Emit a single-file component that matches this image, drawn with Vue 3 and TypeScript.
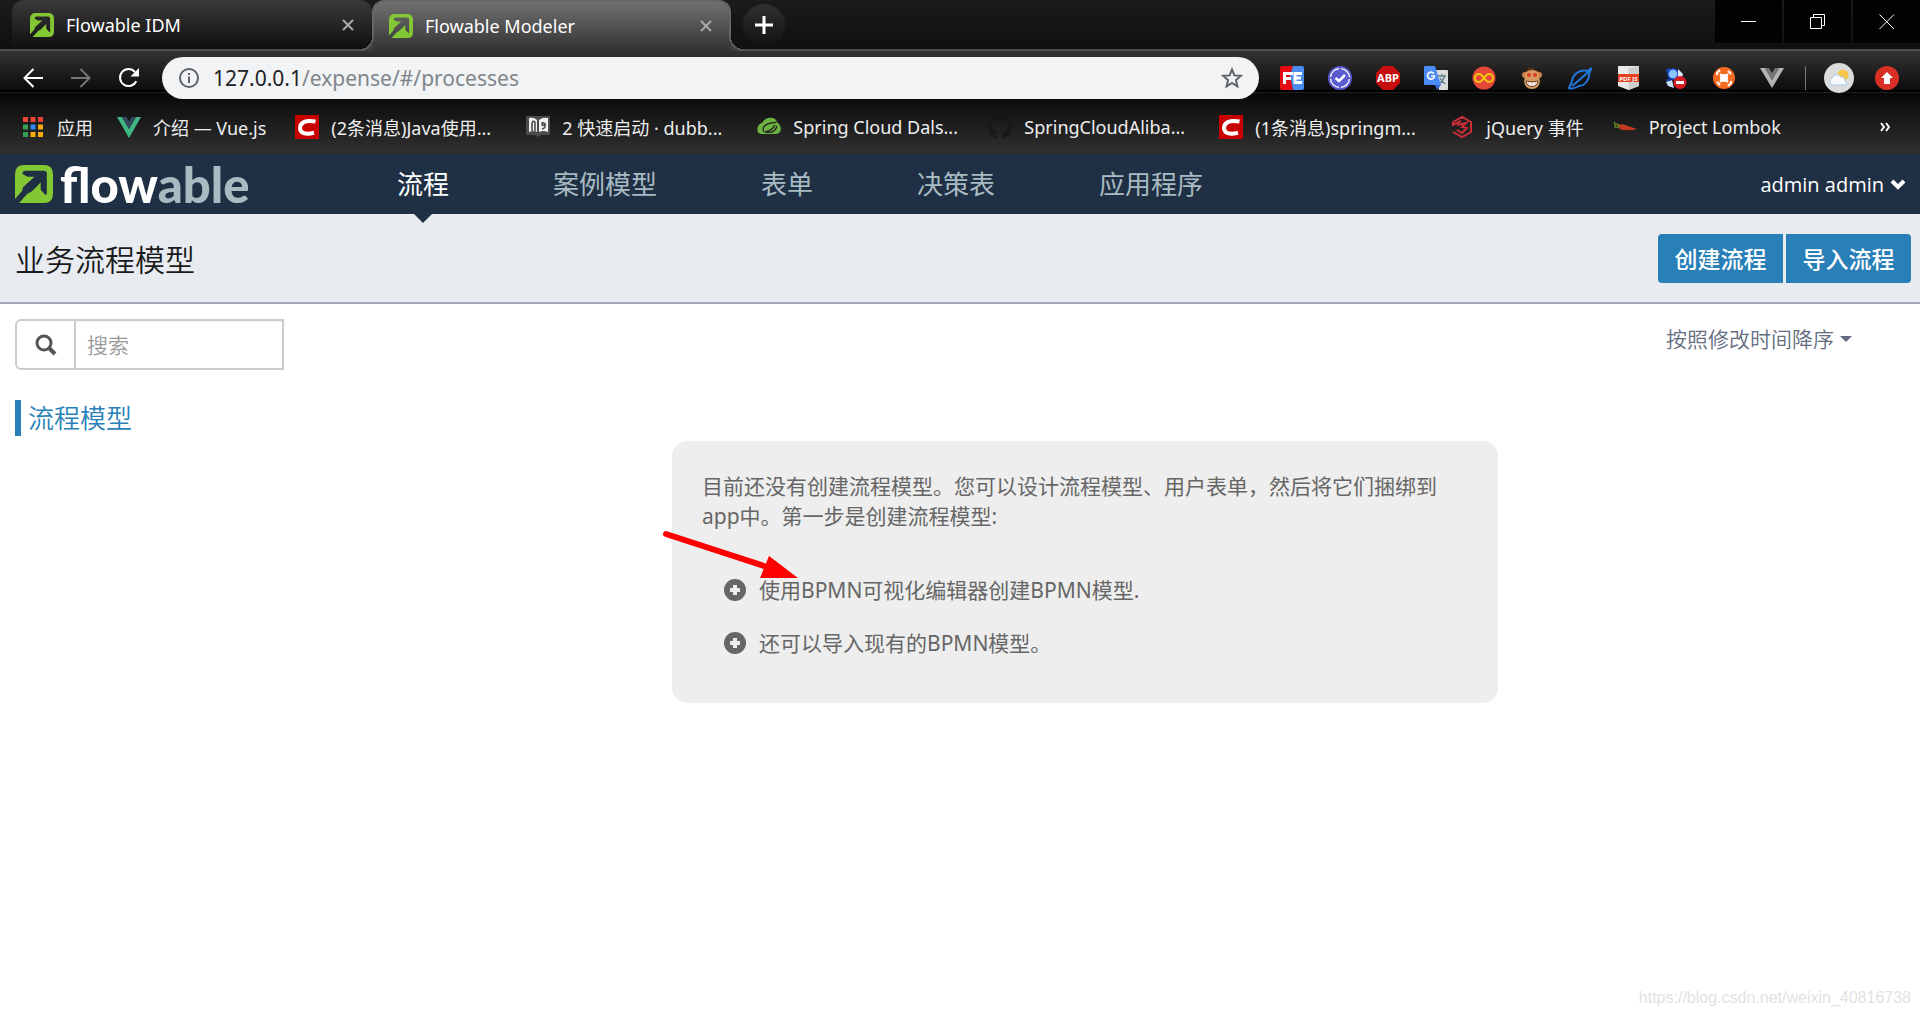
<script setup lang="ts">
import { ref } from 'vue'

interface Tab {
  title: string
  active: boolean
}

interface Bookmark {
  icon: string
  label: string
  fixed: boolean
}

const logoPath =
  'M9 0H28Q37 0 37 9V28Q37 37 28 37H4L12 28 16 26 25 17V24L30 29.500 31 28V8Q31 5.500 28 5.500H9.500Q7 6 7 8.500L12 11.500H19L8 21.500 7 25 0 33V9Q0 0 9 0Z'

const tabs: Tab[] = [
  { title: 'Flowable IDM', active: false },
  { title: 'Flowable Modeler', active: true },
]

const bookmarks: Bookmark[] = [
  { icon: 'apps', label: '应用', fixed: false },
  { icon: 'vue', label: '介绍 — Vue.js', fixed: false },
  { icon: 'csdn', label: '(2条消息)Java使用...', fixed: true },
  { icon: 'dubbo', label: '2 快速启动 · dubb...', fixed: true },
  { icon: 'spring', label: 'Spring Cloud Dals...', fixed: true },
  { icon: 'github', label: 'SpringCloudAliba...', fixed: true },
  { icon: 'csdn', label: '(1条消息)springm...', fixed: true },
  { icon: 'jquery', label: 'jQuery 事件', fixed: false },
  { icon: 'lombok', label: 'Project Lombok', fixed: false },
]

const navItems = ['流程', '案例模型', '表单', '决策表', '应用程序']
const current = ref('流程')
const query = ref('')
const hints = ['使用BPMN可视化编辑器创建BPMN模型.', '还可以导入现有的BPMN模型。']
</script>

<template>
  <div class="screen">
    <header class="browser">
      <div class="tab-strip">
        <div v-for="tab in tabs" :key="tab.title" class="tab" :class="{ active: tab.active }">
          <svg class="favicon" viewBox="0 0 37 37" aria-hidden="true">
            <path fill="#84c735" :d="logoPath" />
          </svg>
          <span class="tab-title">{{ tab.title }}</span>
          <button class="tab-close" type="button" aria-label="关闭标签页">
            <svg viewBox="0 0 14 14" width="14" height="14"><path d="M2 2 12 12M12 2 2 12" /></svg>
          </button>
        </div>
        <button class="new-tab" type="button" aria-label="新标签页">
          <svg viewBox="0 0 18 18" width="18" height="18"><path d="M9 0V18M0 9H18" /></svg>
        </button>
        <div class="window-controls">
          <button type="button" aria-label="最小化">
            <svg viewBox="0 0 16 16" width="16" height="16"><path d="M0 7.5H15" /></svg>
          </button>
          <button type="button" aria-label="还原">
            <svg viewBox="0 0 16 16" width="16" height="16"><path d="M.5 3.500H11.500V14.500H.5ZM3.500 3.500V.5H14.500V11.500H11.500" /></svg>
          </button>
          <button type="button" aria-label="关闭">
            <svg viewBox="0 0 16 16" width="16" height="16"><path d="M.5 .5 15 15M15 .5 .5 15" /></svg>
          </button>
        </div>
      </div>

      <div class="toolbar-area">
        <div class="toolbar">
          <div class="history">
            <button type="button" aria-label="后退">
              <svg viewBox="0 0 22 22" width="22" height="22"><path d="M21 11H3M11.500 2 2.500 11 11.500 20" stroke="#fff" /></svg>
            </button>
            <button type="button" aria-label="前进">
              <svg viewBox="0 0 22 22" width="22" height="22"><path d="M1 11H19M10.500 2 19.500 11 10.500 20" stroke="#777" /></svg>
            </button>
            <button type="button" aria-label="重新加载">
              <svg viewBox="0 0 22 22" width="22" height="22"><path d="M18.200 14.200A8.500 8.500 0 1 1 17 5" stroke="#fff" /><path d="M21 1V9.500H12.500Z" fill="#fff" /></svg>
            </button>
          </div>
          <div class="omnibox">
            <svg viewBox="0 0 22 22" width="22" height="22" aria-hidden="true">
              <circle cx="11" cy="11" r="9" fill="none" stroke="#5f6368" stroke-width="2" />
              <path d="M10 9.500H12V16H10ZM10 6H12V8H10Z" fill="#5f6368" />
            </svg>
            <span class="url" tabindex="0">127.0.0.1<span>/expense/#/processes</span></span>
            <button type="button" aria-label="收藏">
              <svg viewBox="0 0 22 22" width="22" height="22">
                <path d="M11 2.500 13.400 8.400 19.800 8.900 15 13.100 16.400 19.300 11 16 5.600 19.300 7 13.100 2.200 8.900 8.600 8.400Z" fill="none" stroke="#5f6368" stroke-width="2" />
              </svg>
            </button>
          </div>
          <div class="extensions">
            <svg viewBox="0 0 24 24"><path fill="#e60a12" d="M2 0H13L10 9 13 24H2Q0 24 0 22V2Q0 0 2 0Z" /><path fill="#4a8cf0" d="M13 0H22Q24 0 24 2V22Q24 24 22 24H13L10 9Z" /><path fill="none" stroke="#fff" stroke-width="3" d="M4.500 18V7.500H13M4.500 12.500H11M22 7.500H15V16.500H22M15 12H21" /></svg>
            <svg viewBox="0 0 24 24"><circle cx="12" cy="12" r="12" fill="#5b5bd0" /><circle cx="12" cy="12" r="9.500" fill="none" stroke="#fff" stroke-width="1.300" stroke-dasharray="12.900 2" stroke-dashoffset="-1" /><path fill="none" stroke="#fff" stroke-width="2.500" d="M7.500 12 11 15 17 9" /></svg>
            <svg viewBox="0 0 24 24"><path fill="#c70d0d" d="M7 0H17L24 7V17L17 24H7L0 17V7Z" /><text x="12" y="16" text-anchor="middle" font-size="11" font-weight="700" fill="#fff">ABP</text></svg>
            <svg viewBox="0 0 24 24"><path fill="#dcdcdc" d="M11 4H23Q24 4 24 5V23Q24 24 23 24H15Z" /><path fill="none" stroke="#607d8b" stroke-width="1.300" d="M14 10H22M18 8V10M20.500 10Q19.500 15 14.500 18M16 12Q18 16 21.500 18" /><path fill="#3367d6" d="M11 19H17L13 24Z" /><path fill="#4a8af4" d="M1 0H11L17 19H1Q0 19 0 18V1Q0 0 1 0Z" /><path fill="none" stroke="#fff" stroke-width="1.700" d="M9.800 7.500A3.500 3.500 0 1 0 10.500 10H7" /></svg>
            <svg viewBox="0 0 24 24"><circle cx="12" cy="12" r="11.500" fill="#e5473a" /><path fill="none" stroke="#f3c60e" stroke-width="2" d="M12 12C9.500 8.500 8 8 6.800 8A4 4 0 0 0 6.800 16C8 16 9.500 15.500 12 12S15.500 8 17 8A4 4 0 0 1 17 16C15.500 16 14.500 15.500 12 12Z" /></svg>
            <svg viewBox="0 0 24 24"><path fill="#5b3217" d="M4 7 7 4 9 1 11 3 13 1 15 4 19 5 21 10H3Z" /><circle cx="5" cy="9" r="3" fill="#c8844c" /><circle cx="19" cy="9" r="3" fill="#c8844c" /><path fill="#d79a62" d="M6 6Q12 2 18 6L20 15Q19 23 12 23T4 15Z" /><circle cx="9" cy="9" r="2" fill="#e03a2a" /><circle cx="15" cy="9" r="2" fill="#e03a2a" /><path fill="#fff" stroke="#6b3b1a" d="M6 15Q12 17 18 15 17 20.500 12 20.500 7 20.500 6 15Z" /><path stroke="#a98466" stroke-width=".6" d="M9 16V19M12 16V20M15 16V19" /></svg>
            <svg viewBox="0 0 24 24"><path fill="none" stroke="#2277dd" stroke-width="2" d="M24 2Q22 5 21 7C22 13 17 20 11 20 8 22 3 23 1 22 2 18 4 17 4 15 5 8 12 3 20 5L23 2M4 20Q14 12 20 6" /></svg>
            <svg viewBox="0 0 24 24"><path fill="#e9e9e9" d="M2 0H23V20L12.500 24 2 20Z" /><path fill="#cfcfcf" d="M12.500 2 23 0V20L12.500 24Z" /><path fill="#e8401f" d="M2 8H23V16H2Z" /><text x="12.500" y="15" text-anchor="middle" font-size="6" font-weight="700" fill="#fff">PDF JS</text></svg>
            <svg viewBox="0 0 24 24"><circle cx="9" cy="8" r="5" fill="#8cc4ff" stroke="#1d50d8" stroke-width="1.500" /><path fill="#dce9f8" d="M14 3 19 8 18 12H14Z" /><path fill="#c6dcf5" d="M2 16 8 14 10 22 4 20Z" /><path stroke="#1d50d8" stroke-width="1.500" d="M2 5 6 3M2 14 7 14" /><circle cx="16" cy="16.500" r="6.500" fill="#d81b20" /><path fill="#fff" d="M12 15H20V18H12Z" /></svg>
            <svg viewBox="0 0 24 24"><circle cx="12" cy="12" r="11" fill="#f36a21" /><circle cx="12" cy="12" r="4" fill="#fff" /><path fill="none" stroke="#fff" stroke-width="2" d="M8 8 16 16M16 8 8 16M5 9V7L8 4M16 5 19 8M5 16 8 19M16 20 19 17V15" /></svg>
            <svg viewBox="0 0 24 24"><path fill="#b4b4b4" d="M0 2H5L12 14 19 2H24L12 22Z" /><path fill="#777" d="M5 2H9L12 7 15 2H19L12 14Z" /></svg>
          </div>
          <i class="divider"></i>
          <svg class="avatar" viewBox="0 0 30 30" aria-hidden="true"><circle cx="15" cy="15" r="15" fill="#dcdcdc" /><circle cx="19" cy="12" r="5.500" fill="#f8c64a" /><path fill="#f6faff" stroke="#a9c8e6" d="M8 22A4 4 0 0 1 8 15 5 5 0 0 1 17 14 3.500 3.500 0 0 1 21 18 2.500 2.500 0 0 1 22 22Z" /></svg>
          <svg class="update" viewBox="0 0 24 24" aria-hidden="true"><circle cx="12" cy="12" r="12" fill="#d93025" /><path fill="#fff" d="M12 6 18 12H15V18H9V12H6Z" /></svg>
        </div>

        <nav class="bookmarks" aria-label="书签">
          <a v-for="b in bookmarks" :key="b.label" href="#" class="bookmark" :class="{ fixed: b.fixed, apps: b.icon === 'apps' }">
            <svg v-if="b.icon === 'apps'" class="apps-icon" viewBox="0 0 20 20"><path fill="#ea4335" d="M0 0H5V5H0ZM7.500 0H12.500V5H7.500ZM15 0H20V5H15Z" /><path fill="#34a053" d="M0 7.500H5V12.500H0ZM0 15H5V20H0Z" /><path fill="#2a8af6" d="M7.500 7.500H12.500V12.500H7.500Z" /><path fill="#f9ab0b" d="M15 7.500H20V12.500H15ZM7.500 15H12.500V20H7.500ZM15 15H20V20H15Z" /></svg>
            <svg v-else-if="b.icon === 'vue'" viewBox="0 0 24 24"><path fill="#41b883" d="M0 2H5L12 14 19 2H24L12 23Z" /><path fill="#35495e" d="M5 2H9.500L12 6.500 14.500 2H19L12 14Z" /></svg>
            <svg v-else-if="b.icon === 'csdn'" viewBox="0 0 24 24"><path fill="#c90000" d="M0 0H24V24H0Z" /><path fill="none" stroke="#fff" stroke-width="4" d="M20.500 6.500C10 4.500 5 8 5 13S10 20 19 17.800" /></svg>
            <svg v-else-if="b.icon === 'dubbo'" viewBox="0 0 24 24"><path fill="#4b4b4b" d="M0 1H24V20H15L12 22 9 20H0Z" /><path fill="#f1f1f1" d="M3 3Q8 2 11 5V17Q8 15 3 17ZM13 5Q17 2 22 3V17Q17 15 13 17Z" /><path fill="none" stroke="#444" stroke-width="1.500" d="M6 16V8M9 16V7M6 8Q7 5 9 7M19 9Q16 6 16 9T19 9Q20 13 16 14" /></svg>
            <svg v-else-if="b.icon === 'spring'" viewBox="0 0 24 24"><path fill="#6db33f" d="M4 19C-2 18 0 9 5 8 8 2 15 2 18 4L20 6C21 7 20 8 22 9 26 14 23 19 19 19Z" /><path fill="none" stroke="#222" stroke-width="1.300" d="M7 17C4 12 9 9 14 8 18 8 20 7 21 5M8 17Q16 15 18 10M8 17Q18 19 20 11" /></svg>
            <svg v-else-if="b.icon === 'github'" viewBox="0 0 16 16"><path fill="#171717" fill-rule="evenodd" d="M8 0C3.580 0 0 3.580 0 8c0 3.540 2.290 6.530 5.470 7.590.4.070.55-.17.55-.38 0-.19-.01-.82-.01-1.490-2.010.37-2.530-.49-2.690-.94-.09-.23-.48-.94-.82-1.130-.28-.15-.68-.52-.01-.53.63-.01 1.080.58 1.230.82.72 1.210 1.870.87 2.330.66.070-.52.28-.87.51-1.070-1.780-.2-3.640-.89-3.640-3.950 0-.87.31-1.590.82-2.150-.08-.2-.36-1.020.08-2.120 0 0 .67-.21 2.200.82.64-.18 1.320-.27 2-.27s1.360.09 2 .27c1.530-1.040 2.200-.82 2.200-.82.44 1.100.16 1.920.08 2.120.51.56.82 1.270.82 2.150 0 3.070-1.870 3.750-3.650 3.950.29.25.54.73.54 1.480 0 1.070-.01 1.930-.01 2.200 0 .21.15.46.55.38A8.010 8.010 0 0 0 16 8c0-4.420-3.580-8-8-8Z" /></svg>
            <svg v-else-if="b.icon === 'jquery'" viewBox="0 0 24 24"><path fill="none" stroke="#cb2d37" stroke-width="2" d="M3 7 12 2 21 7V17L12 22 3 17M3 7V10L11 6M7 10 16 8 12 12 17 13 12 18 7 15" /></svg>
            <svg v-else viewBox="0 0 24 24"><path fill="#c33a22" d="M4 10Q10 8 15 11L24 14Q18 16 11 15 5 15 4 10Z" /><path fill="none" stroke="#5f7d2a" stroke-width="1.500" d="M1 7Q3 9 2 12H6Q6 9 3 9" /></svg>
            <span>{{ b.label }}</span>
          </a>
          <button class="overflow" type="button" aria-label="更多书签">
            <svg viewBox="0 0 10 10" width="10" height="10"><path d="M1 1 4 5 1 9M6 1 9 5 6 9" /></svg>
          </button>
        </nav>
      </div>
    </header>

    <div class="navbar">
      <a class="brand" href="#" aria-label="flowable">
        <svg viewBox="0 0 37 37" aria-hidden="true">
          <path fill="#84c735" :d="logoPath" />
        </svg>
        <span class="wordmark">flow<span>able</span></span>
      </a>
      <nav class="menu">
        <a v-for="item in navItems" :key="item" href="#" :class="{ current: item === current }" @click.prevent="current = item">{{ item }}</a>
      </nav>
      <button class="account" type="button">
        admin admin
        <svg viewBox="0 0 16 12" width="16" height="12"><path d="M2 3 8 9 14 3" /></svg>
      </button>
    </div>

    <div class="subheader">
      <h1>业务流程模型</h1>
      <div class="actions">
        <button type="button">创建流程</button>
        <button type="button">导入流程</button>
      </div>
    </div>

    <main class="content">
      <div class="filters">
        <label class="search">
          <span class="search-icon">
            <svg viewBox="0 0 22 22" width="22" height="22"><circle cx="9" cy="9" r="7" /><path d="M14 14 20 20" /></svg>
          </span>
          <input v-model="query" type="text" placeholder="搜索" aria-label="搜索" />
        </label>
        <button class="sort" type="button">按照修改时间降序<i></i></button>
      </div>
      <h2>流程模型</h2>
      <section class="empty">
        <p>目前还没有创建流程模型。您可以设计流程模型、用户表单，然后将它们捆绑到app中。第一步是创建流程模型:</p>
        <ul>
          <li v-for="hint in hints" :key="hint">
            <a href="#">
              <svg viewBox="0 0 22 22" width="22" height="22"><circle cx="11" cy="11" r="11" fill="#666" /><path d="M11 6V16M6 11H16" stroke="#eee" stroke-width="4" /></svg>
              <span>{{ hint }}</span>
            </a>
          </li>
        </ul>
        <svg class="pointer" viewBox="0 0 140 54" width="140" height="54" aria-hidden="true">
          <path d="M4 8 102 40" stroke="#f00" stroke-width="6" stroke-linecap="round" />
          <path d="M107 30 136 52H98Z" fill="#f00" />
        </svg>
      </section>
    </main>
    <p class="watermark">https://blog.csdn.net/weixin_40816738</p>
  </div>
</template>

<style>
body {
  margin: 0;
}
</style>

<style scoped>
* {
  box-sizing: border-box;
}

.screen {
  position: relative;
  display: flex;
  flex-direction: column;
  min-height: 100vh;
  background: #fff;
  font-family: "Noto Sans", "Noto Sans CJK SC", sans-serif;
}

button {
  padding: 0;
  border: 0;
  background: none;
  font: inherit;
  color: inherit;
}

svg {
  display: block;
  flex: none;
}

a {
  color: inherit;
  text-decoration: none;
}

/* browser frame */
.tab-strip {
  display: flex;
  height: 51px;
  padding-left: 12px;
  background: linear-gradient(#1b1b1b, #0f0f0f);
  box-shadow: inset 0 -2px #505050;
}

.tab {
  display: flex;
  align-items: center;
  width: 360px;
  height: 51px;
  padding: 2px 17px 1px 18px;
  border-bottom: 2px solid #505050;
  border-radius: 12px 12px 0 0;
  background: linear-gradient(#3a3a3a, #0f0f0f);
  color: #fff;
  font-size: 18px;
}

.tab.active {
  position: relative;
  width: 359px;
  padding: 0 16px 2px 15px;
  border: 2px solid #666;
  border-bottom: 0;
  border-radius: 12px 12px 0 0;
  background: linear-gradient(#707070, #333);
}

/* flared feet joining the active tab to the toolbar */
.tab.active::before,
.tab.active::after {
  position: absolute;
  bottom: 0;
  width: 14px;
  height: 14px;
  content: "";
}

.tab.active::before {
  right: 100%;
  background: radial-gradient(circle at 0 0, transparent 12px, #5a5a5a 12px, #5a5a5a 14px, #3c3c3c 14px);
}

.tab.active::after {
  left: 100%;
  background: radial-gradient(circle at 100% 0, transparent 12px, #5a5a5a 12px, #5a5a5a 14px, #3c3c3c 14px);
}

.favicon {
  width: 24px;
  height: 24px;
}

.tab-title {
  flex: 1;
  padding-left: 12px;
}

.tab-close path {
  stroke: #aaa;
  stroke-width: 2;
}

.new-tab {
  display: grid;
  place-items: center;
  width: 42px;
  height: 42px;
  margin: 4px 0 0 12px;
  border-radius: 50%;
  background: linear-gradient(#303030, #121212);
}

.new-tab path {
  stroke: #fff;
  stroke-width: 3;
}

.window-controls {
  display: flex;
  gap: 2px;
  margin-left: auto;
}

.window-controls button {
  display: grid;
  place-items: center;
  width: 67px;
  height: 43px;
  background: #020202;
}

.window-controls path {
  fill: none;
  stroke: #fff;
}

.toolbar-area {
  padding-top: 6px;
  background: linear-gradient(#333, #0c0c0c 39px, #000 39px, #000 41px, #202020 41px, #202020 42px, #080808 42px, #303030 103px);
}

.toolbar {
  display: flex;
  align-items: center;
  height: 42px;
  padding: 0 21px 0 22px;
}

.history {
  display: flex;
  gap: 26px;
  margin-right: 22px;
}

.history path {
  fill: none;
  stroke-width: 2;
}

.history path[fill] {
  fill: #fff;
}

.omnibox {
  display: flex;
  flex: 1;
  align-items: center;
  height: 42px;
  padding: 0 16px;
  border-radius: 21px;
  background: #f1f3f4;
}

.url {
  flex: 1;
  padding-left: 13px;
  color: #202124;
  font-size: 21px;
}

.url span {
  color: #80868b;
}

.extensions {
  display: flex;
  gap: 24px;
  margin-left: 21px;
}

.extensions svg {
  width: 24px;
  height: 24px;
}

.divider {
  width: 1px;
  height: 24px;
  margin: 0 18px 0 21px;
  background: #777;
}

.avatar {
  width: 30px;
  height: 30px;
  margin-right: 21px;
}

.update {
  width: 24px;
  height: 24px;
}

.bookmarks {
  display: flex;
  align-items: center;
  height: 55px;
  padding: 0 30px 0 23px;
  color: #eee;
  font-size: 18px;
}

.bookmark {
  display: flex;
  align-items: center;
  gap: 12px;
  margin-right: 29px;
  white-space: nowrap;
}

.bookmark.apps {
  gap: 14px;
  margin-right: 24px;
}

.bookmark.fixed {
  width: 231px;
  margin-right: 0;
}

.bookmark svg {
  width: 24px;
  height: 24px;
}

.bookmark .apps-icon {
  width: 20px;
  height: 20px;
}

.overflow {
  margin-left: auto;
}

.overflow path {
  fill: none;
  stroke: #fff;
  stroke-width: 2;
}

/* application */
.navbar {
  display: flex;
  align-items: center;
  height: 60px;
  padding: 0 14px 0 15px;
  background: #1f3044;
  color: #fff;
}

.brand {
  display: flex;
  align-items: center;
  gap: 7px;
  width: 330px;
}

.brand svg {
  width: 38px;
  height: 38px;
}

.wordmark {
  font: 900 49px/56px Lato, sans-serif;
}

.wordmark span {
  color: #a8bbc2;
}

.menu {
  display: flex;
  color: #a8bbc2;
  font-size: 26px;
}

.menu a {
  position: relative;
  padding: 0 52px;
  line-height: 60px;
}

.menu .current {
  color: #fff;
}

.menu .current::after {
  position: absolute;
  top: 100%;
  left: 50%;
  border: 9px solid transparent;
  border-top-color: #1f3044;
  border-bottom: 0;
  margin-left: -9px;
  content: "";
}

.account {
  display: flex;
  align-items: center;
  gap: 6px;
  margin-left: auto;
  font-family: "Open Sans", sans-serif;
  font-size: 20px;
}

.account path {
  fill: none;
  stroke: #fff;
  stroke-width: 4;
}

.subheader {
  display: flex;
  align-items: center;
  justify-content: space-between;
  height: 90px;
  padding: 0 9px 0 15px;
  border-bottom: 2px solid #a0a9b8;
  background: #e8ecf0;
}

h1 {
  margin: 0;
  color: #1a1a1a;
  font-size: 30px;
  font-weight: 350;
}

.actions {
  display: flex;
  gap: 3px;
}

.actions button {
  width: 125px;
  height: 49px;
  background: #2980b9;
  color: #fff;
  font-size: 23px;
  font-weight: 500;
}

.actions button:first-child {
  border-radius: 4px 0 0 4px;
}

.actions button:last-child {
  border-radius: 0 4px 4px 0;
}

.content {
  padding: 15px 0;
}

.filters {
  display: flex;
  align-items: flex-start;
  justify-content: space-between;
  padding: 0 68px 0 15px;
}

.search {
  display: flex;
  width: 269px;
  height: 51px;
  border: 2px solid #ccc;
  border-radius: 6px 0 0 6px;
}

.search-icon {
  display: grid;
  flex: none;
  place-items: center;
  width: 59px;
  border-right: 2px solid #ccc;
}

.search-icon svg {
  fill: none;
  stroke: #555;
  stroke-width: 3;
}

.search-icon path {
  stroke-width: 4;
}

.search input {
  width: 100%;
  min-width: 0;
  padding: 0 11px;
  border: 0;
  box-shadow: inset 0 1px 1px #eee;
  font: 350 21px "Noto Sans", "Noto Sans CJK SC", sans-serif;
}

.search input::placeholder {
  color: #999;
}

.sort {
  display: flex;
  align-items: center;
  gap: 6px;
  margin-top: 5px;
  color: #636c80;
  font-size: 21px;
  font-weight: 350;
  line-height: 30px;
}

.sort i {
  border: 6px solid transparent;
  border-top-color: #636c80;
  border-bottom: 0;
}

h2 {
  margin: 30px 0 5px 15px;
  padding-left: 7px;
  border-left: 6px solid #2980b9;
  color: #2980b9;
  font-size: 26px;
  font-weight: 350;
  line-height: 36px;
}

.empty {
  position: relative;
  width: 43%;
  margin-left: 35%;
  padding: 30px 30px 45px;
  border-radius: 15px;
  background: #eee;
  color: #666;
  font-size: 21px;
  line-height: 30px;
}

.empty p {
  margin: 0 0 44px;
}

.empty ul {
  display: flex;
  flex-direction: column;
  gap: 23px;
  margin: 0;
  padding: 0 0 0 22px;
  list-style: none;
}

.empty li a {
  display: flex;
  align-items: center;
  gap: 13px;
}

.pointer {
  position: absolute;
  top: 85px;
  left: -10px;
}

.watermark {
  position: absolute;
  right: 9px;
  bottom: 8px;
  margin: 0;
  color: #e2e2e2;
  font: 16px/20px "Liberation Sans", Arial, sans-serif;
}
</style>
